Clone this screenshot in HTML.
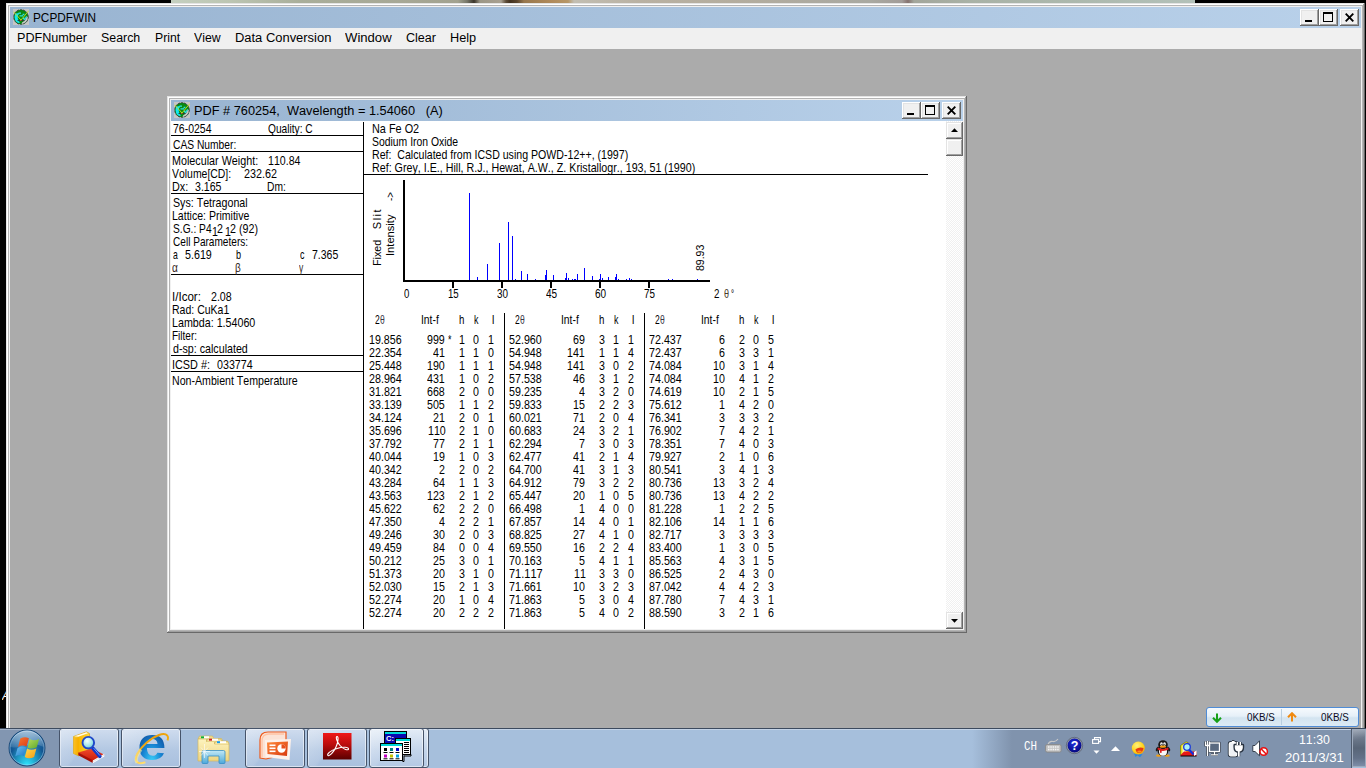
<!DOCTYPE html>
<html lang="en"><head><meta charset="utf-8"><title>PCPDFWIN</title>
<style>
*{box-sizing:border-box;margin:0;padding:0}
html,body{width:1366px;height:768px;overflow:hidden;background:#000}
body{position:relative;font-family:'Liberation Sans',sans-serif;font-size:12px;color:#000}
div,span,svg{position:absolute}
.t{white-space:pre;line-height:1;transform-origin:0 0;font-kerning:none}
.n{font-size:13px}
.c{font-size:11px}
.u,.d{font-size:12px}
.m{font-size:12px;font-family:'Liberation Mono',monospace}
.g{font-size:13px;font-family:'Liberation Serif',serif}
.frame{background:#f0f0f0;box-shadow:inset -1px -1px 0 #696969,inset 1px 1px 0 #e3e3e3,inset -2px -2px 0 #a0a0a0,inset 2px 2px 0 #fff,inset 0 0 0 3px #b4b4b4}
.cap{background:linear-gradient(90deg,#99b4d1,#b9d1ea);height:21px}
.btn{width:19px;height:17px;background:#f0f0f0;box-shadow:inset -1px -1px 0 #696969,inset 1px 1px 0 #fff,inset -2px -2px 0 #a0a0a0,inset 2px 2px 0 #e3e3e3}
.sb{width:17px;height:17px;background:#f0f0f0;box-shadow:inset -1px -1px 0 #696969,inset 1px 1px 0 #e3e3e3,inset -2px -2px 0 #a0a0a0,inset 2px 2px 0 #fff}
.hl{height:1px;background:#000}
.vl{width:1px;background:#000}
.pk{width:1px;background:#00f}
.tb{border:1px solid #46546a;border-radius:3px;box-shadow:inset 0 0 0 1px rgba(255,255,255,.55)}
.gl{left:1px;top:1px;right:1px;bottom:1px;border-radius:2px;background:linear-gradient(125deg,rgba(255,255,255,.30) 0,rgba(255,255,255,.10) 38%,rgba(255,255,255,0) 42%)}
.ic{overflow:visible}
</style></head>
<body>
<div id="wall" style="left:171px;top:0;width:1024px;height:3px;background:linear-gradient(90deg,#c4cfbf 0px,#bcc5b2 60px,#a9ae9a 130px,#a7a896 230px,#a2a28f 287px,#77786a 296px,#3b352a 303px,#9c9786 309px,#a8a090 330px,#5c4c38 335px,#42321f 339px,#5a452d 346px,#98784e 353px,#b08a5a 380px,#b79766 397px,#c2beb2 403px,#b9b1a2 470px,#b4ad9e 560px,#adaaa0 640px,#a9a9a1 700px,#a29c98 731px,#85726f 737px,#a3a69b 743px,#a9b2a6 800px,#acb8ad 900px,#b3c1b9 1024px)"></div>
<span class="t u" style="left:2px;top:690px;color:#fff;font-style:italic;font-size:12px;width:4px;overflow:hidden">A</span>
<div id="main" class="frame" style="left:6px;top:3px;width:1359px;height:745px">
<div class="cap" style="left:4px;top:4px;width:1351px">
<svg width="16" height="16" viewBox="0 0 16 16" style="left:3px;top:2px"><rect width="16" height="16" fill="#c6c6c6"/><circle cx="8" cy="8" r="7.300" fill="#0a8a10"/><path d="M2.300 4.500Q.6 8 2.600 12q2 2.600 4.400 1.600L5.500 11.500Q4.200 9 5 6.500L6.500 4z" fill="#10e8f0"/><path d="M5.500 3.500h2.500v1.300H5.500zM6.500 6.200h3.500v1.400H6.500zM9.600 4.800h1.800v1.400H9.600zM10 8.500h1.500v1.500H10z" fill="#30e0e0"/><path d="M15.200 8.500a7.300 7.300 0 0 1-6.500 6.800q-1-.6.300-1.800 4-2 4.700-6.500z" fill="#c8c8c8"/><path d="M10.500 11.500q2-1.500 3-4" stroke="#30d8e0" stroke-width="1.200" fill="none"/><path d="M4.500 11.600h7" stroke="#303838" stroke-width="1"/><rect x="7.200" y="11.100" width="1.200" height="1" fill="#e07020"/><path d="M6.600 12.300h3L8 15.300z" fill="#0a8a10"/><circle cx="8" cy="8" r="7.300" fill="none" stroke="#2a3a3a" stroke-width=".9" stroke-dasharray="2.500 .8"/><path d="M.6 2.800L8 11 15.600 1.800" fill="none" stroke="#c8e020" stroke-width=".9"/></svg>
<span class="t u" style="left:23.00px;top:5px;transform:scaleX(0.9837);">PCPDFWIN</span>
<div class="btn" style="left:1290px;top:2px"><div style="left:5px;top:11px;width:7px;height:2px;background:#000"></div></div><div class="btn" style="left:1309px;top:2px"><div style="left:4px;top:3px;width:10px;height:10px;border:1px solid #000;border-top-width:2px"></div></div><div class="btn" style="left:1330px;top:2px"><svg width="9" height="9" viewBox="0 0 9 9" style="left:5px;top:4px"><path d="M0.7 0.7L8.3 8.3M8.3 0.7L0.7 8.3" stroke="#000" stroke-width="1.9"/></svg></div>
</div>
<div id="menu" style="left:4px;top:25px;width:1351px;height:21px;background:#f0f0f0">
<span class="t u" style="left:7.00px;top:4px;transform:scaleX(1.0497);">PDFNumber</span>
<span class="t u" style="left:91.20px;top:4px;transform:scaleX(1.0309);">Search</span>
<span class="t u" style="left:144.50px;top:4px;transform:scaleX(1.0182);">Print</span>
<span class="t u" style="left:184.30px;top:4px;transform:scaleX(1.0219);">View</span>
<span class="t u" style="left:225.40px;top:4px;transform:scaleX(1.0777);">Data Conversion</span>
<span class="t u" style="left:335.00px;top:4px;transform:scaleX(1.0927);">Window</span>
<span class="t u" style="left:396.00px;top:4px;transform:scaleX(1.0460);">Clear</span>
<span class="t u" style="left:440.00px;top:4px;transform:scaleX(1.0598);">Help</span>
</div>
<div id="mdi" style="left:4px;top:46px;width:1351px;height:700px;background:#ababab">
<div id="child" class="frame" style="left:157px;top:47px;width:800px;height:537px">
<div class="cap" style="left:4px;top:4px;width:792px">
<svg width="16" height="16" viewBox="0 0 16 16" style="left:3px;top:2px"><rect width="16" height="16" fill="#c6c6c6"/><circle cx="8" cy="8" r="7.300" fill="#0a8a10"/><path d="M2.300 4.500Q.6 8 2.600 12q2 2.600 4.400 1.600L5.500 11.500Q4.200 9 5 6.500L6.500 4z" fill="#10e8f0"/><path d="M5.500 3.500h2.500v1.300H5.500zM6.500 6.200h3.500v1.400H6.500zM9.600 4.800h1.800v1.400H9.600zM10 8.500h1.500v1.500H10z" fill="#30e0e0"/><path d="M15.200 8.500a7.300 7.300 0 0 1-6.500 6.800q-1-.6.300-1.800 4-2 4.700-6.500z" fill="#c8c8c8"/><path d="M10.500 11.500q2-1.500 3-4" stroke="#30d8e0" stroke-width="1.200" fill="none"/><path d="M4.500 11.600h7" stroke="#303838" stroke-width="1"/><rect x="7.200" y="11.100" width="1.200" height="1" fill="#e07020"/><path d="M6.600 12.300h3L8 15.300z" fill="#0a8a10"/><circle cx="8" cy="8" r="7.300" fill="none" stroke="#2a3a3a" stroke-width=".9" stroke-dasharray="2.500 .8"/><path d="M.6 2.800L8 11 15.600 1.800" fill="none" stroke="#c8e020" stroke-width=".9"/></svg>
<span class="t u" style="left:23.00px;top:5px;transform:scaleX(1.0636);">PDF # 760254,  Wavelength = 1.54060   (A)</span>
<div class="btn" style="left:731px;top:2px"><div style="left:5px;top:11px;width:7px;height:2px;background:#000"></div></div><div class="btn" style="left:750px;top:2px"><div style="left:4px;top:3px;width:10px;height:10px;border:1px solid #000;border-top-width:2px"></div></div><div class="btn" style="left:771px;top:2px"><svg width="9" height="9" viewBox="0 0 9 9" style="left:5px;top:4px"><path d="M0.7 0.7L8.3 8.3M8.3 0.7L0.7 8.3" stroke="#000" stroke-width="1.9"/></svg></div>
</div>
<div id="content" style="left:4px;top:25px;width:775px;height:508px;background:#fff;overflow:hidden">
<div class="hl" style="left:0;top:14px;width:193px"></div>
<div class="hl" style="left:0;top:30px;width:193px"></div>
<div class="hl" style="left:0;top:72px;width:193px"></div>
<div class="hl" style="left:0;top:153px;width:193px"></div>
<div class="hl" style="left:0;top:234px;width:193px"></div>
<div class="hl" style="left:0;top:250px;width:193px"></div>
<div class="vl" style="left:192px;top:1px;height:507px"></div>
<div class="hl" style="left:192px;top:53px;width:565px"></div>
<span class="t n" style="left:1.70px;top:1px;transform:scaleX(0.8067);">76-0254</span>
<span class="t n" style="left:96.80px;top:1px;transform:scaleX(0.7833);">Quality: C</span>
<span class="t n" style="left:1.70px;top:17px;transform:scaleX(0.7892);">CAS Number:</span>
<span class="t n" style="left:0.87px;top:33px;transform:scaleX(0.8279);">Molecular Weight:</span>
<span class="t n" style="left:97.30px;top:33px;transform:scaleX(0.8168);">110.84</span>
<span class="t n" style="left:1.30px;top:46px;transform:scaleX(0.8029);">Volume[CD]:</span>
<span class="t n" style="left:72.60px;top:46px;transform:scaleX(0.8297);">232.62</span>
<span class="t n" style="left:0.87px;top:59px;transform:scaleX(0.8330);">Dx:</span>
<span class="t n" style="left:23.90px;top:59px;transform:scaleX(0.8142);">3.165</span>
<span class="t n" style="left:96.01px;top:59px;transform:scaleX(0.7877);">Dm:</span>
<span class="t n" style="left:1.70px;top:75px;transform:scaleX(0.8193);">Sys: Tetragonal</span>
<span class="t n" style="left:0.89px;top:88px;transform:scaleX(0.8106);">Lattice: Primitive</span>
<span class="t n" style="left:1.70px;top:114px;transform:scaleX(0.7755);">Cell Parameters:</span>
<span class="t n" style="left:1.70px;top:127px;transform:scaleX(0.6625);">a</span>
<span class="t n" style="left:13.70px;top:127px;transform:scaleX(0.8235);">5.619</span>
<span class="t n" style="left:65.00px;top:127px;transform:scaleX(0.7000);">b</span>
<span class="t n" style="left:128.80px;top:127px;transform:scaleX(0.6857);">c</span>
<span class="t n" style="left:140.90px;top:127px;transform:scaleX(0.8080);">7.365</span>
<span class="t n" style="left:0.81px;top:169px;transform:scaleX(0.8901);">I/Icor:</span>
<span class="t n" style="left:39.70px;top:169px;transform:scaleX(0.8177);">2.08</span>
<span class="t n" style="left:0.89px;top:182px;transform:scaleX(0.8090);">Rad: CuKa1</span>
<span class="t n" style="left:0.88px;top:195px;transform:scaleX(0.8233);">Lambda: 1.54060</span>
<span class="t n" style="left:0.93px;top:208px;transform:scaleX(0.7705);">Filter:</span>
<span class="t n" style="left:1.70px;top:221px;transform:scaleX(0.8214);">d-sp: calculated</span>
<span class="t n" style="left:0.86px;top:237px;transform:scaleX(0.8360);">ICSD #:</span>
<span class="t n" style="left:45.70px;top:237px;transform:scaleX(0.8227);">033774</span>
<span class="t n" style="left:0.88px;top:253px;transform:scaleX(0.8160);">Non-Ambient Temperature</span>
<span class="t n" style="left:1.70px;top:101px;transform:scaleX(0.7853);">S.G.: P4</span>
<span class="t n" style="left:41.20px;top:104px;transform:scaleX(0.8200);">1</span><span class="t n" style="left:45.60px;top:101px;transform:scaleX(0.8200);">2</span><span class="t n" style="left:53.60px;top:104px;transform:scaleX(0.8200);">1</span><span class="t n" style="left:58.60px;top:101px;transform:scaleX(0.8236);">2 (92)</span>
<span class="t n" style="left:0.90px;top:140px;transform:scaleX(0.7750);color:#33261c;">α</span>
<span class="t n" style="left:64.40px;top:140px;transform:scaleX(0.7714);color:#33261c;">β</span>
<span class="t n" style="left:127.90px;top:140px;transform:scaleX(0.6571);color:#33261c;">γ</span>
<span class="t n" style="left:200.56px;top:1px;transform:scaleX(0.8363);">Na Fe O2</span>
<span class="t n" style="left:201.40px;top:14px;transform:scaleX(0.7996);">Sodium Iron Oxide</span>
<span class="t n" style="left:200.58px;top:27px;transform:scaleX(0.8151);">Ref:  Calculated from ICSD using POWD-12++, (1997)</span>
<span class="t n" style="left:200.58px;top:40px;transform:scaleX(0.8225);">Ref: Grey, I.E., Hill, R.J., Hewat, A.W., Z. Kristallogr., 193, 51 (1990)</span>
<div id="chart" style="left:193px;top:55px;width:400px;height:135px">
<div style="left:39px;top:4px;width:2px;height:102px;background:#000"></div>
<div style="left:39px;top:104px;width:307px;height:2px;background:#000"></div>
<div style="left:88px;top:106px;width:2px;height:6px;background:#000"></div>
<div style="left:137px;top:106px;width:2px;height:6px;background:#000"></div>
<div style="left:186px;top:106px;width:2px;height:6px;background:#000"></div>
<div style="left:235px;top:106px;width:2px;height:6px;background:#000"></div>
<div style="left:284px;top:106px;width:2px;height:6px;background:#000"></div>
<div class="pk" style="left:105px;top:17px;height:87px"></div><div class="pk" style="left:113px;top:101px;height:3px"></div><div class="pk" style="left:123px;top:88px;height:16px"></div><div class="pk" style="left:135px;top:67px;height:37px"></div><div class="pk" style="left:144px;top:46px;height:58px"></div><div class="pk" style="left:148px;top:60px;height:44px"></div><div class="pk" style="left:151px;top:103px;height:1px"></div><div class="pk" style="left:157px;top:95px;height:9px"></div><div class="pk" style="left:163px;top:98px;height:6px"></div><div class="pk" style="left:171px;top:103px;height:1px"></div><div class="pk" style="left:181px;top:99px;height:5px"></div><div class="pk" style="left:182px;top:94px;height:10px"></div><div class="pk" style="left:189px;top:99px;height:5px"></div><div class="pk" style="left:201px;top:102px;height:2px"></div><div class="pk" style="left:202px;top:97px;height:7px"></div><div class="pk" style="left:204px;top:102px;height:2px"></div><div class="pk" style="left:208px;top:103px;height:1px"></div><div class="pk" style="left:210px;top:103px;height:1px"></div><div class="pk" style="left:211px;top:103px;height:1px"></div><div class="pk" style="left:213px;top:98px;height:6px"></div><div class="pk" style="left:220px;top:92px;height:12px"></div><div class="pk" style="left:228px;top:100px;height:4px"></div><div class="pk" style="left:235px;top:103px;height:1px"></div><div class="pk" style="left:236px;top:98px;height:6px"></div><div class="pk" style="left:238px;top:102px;height:2px"></div><div class="pk" style="left:244px;top:101px;height:3px"></div><div class="pk" style="left:251px;top:101px;height:3px"></div><div class="pk" style="left:252px;top:98px;height:6px"></div><div class="pk" style="left:254px;top:103px;height:1px"></div><div class="pk" style="left:262px;top:103px;height:1px"></div><div class="pk" style="left:265px;top:102px;height:2px"></div><div class="pk" style="left:267px;top:103px;height:1px"></div><div class="pk" style="left:304px;top:103px;height:1px"></div><div class="pk" style="left:308px;top:103px;height:1px"></div><div class="pk" style="left:333px;top:103px;height:1px"></div>
<span class="t d" style="left:40.40px;top:112px;transform:scaleX(0.8000);">0</span>
<span class="t d" style="left:84.00px;top:112px;transform:scaleX(0.8045);">15</span>
<span class="t d" style="left:132.90px;top:112px;transform:scaleX(0.8264);">30</span>
<span class="t d" style="left:181.60px;top:112px;transform:scaleX(0.8337);">45</span>
<span class="t d" style="left:230.80px;top:112px;transform:scaleX(0.8337);">60</span>
<span class="t d" style="left:280.00px;top:112px;transform:scaleX(0.8191);">75</span>
<span class="t d" style="left:349.70px;top:112px;transform:scaleX(0.8143);">2</span>
<span class="t d" style="left:360.20px;top:112px;transform:scaleX(0.7571);color:#4a3a2a;">θ</span>
<span class="t d" style="left:367.00px;top:112px;transform:scaleX(0.6400);">°</span>
<div style="left:17px;top:90px;width:0;height:0;transform:rotate(-90deg);transform-origin:0 0"><span class="t c" style="left:0.20px;top:-9px;transform:scaleX(0.9783);">Fixed</span><span class="t c" style="left:36.80px;top:-9px;letter-spacing:1.5px;">Slit</span></div>
<div style="left:30px;top:80px;width:0;height:0;transform:rotate(-90deg);transform-origin:0 0"><span class="t c" style="left:-0.21px;top:-9px;transform:scaleX(1.0132);">Intensity</span><span class="t c" style="left:55.30px;top:-9px;transform:scaleX(0.8900);">-&gt;</span></div>
<div style="left:340px;top:96px;width:0;height:0;transform:rotate(-90deg);transform-origin:0 0"><span class="t c" style="left:0.90px;top:-9px;transform:scaleX(0.9559);">89.93</span></div>
</div>
<div id="table" style="left:193px;top:187px;width:420px;height:320px">
<span class="t n" style="left:10.80px;top:5px;transform:scaleX(0.6571);">2</span>
<span class="t n" style="left:16.30px;top:5px;transform:scaleX(0.6571);color:#3a3a4a;">θ</span>
<span class="t n" style="left:56.91px;top:5px;transform:scaleX(0.7942);">Int-f</span>
<span class="t n" style="left:94.80px;top:5px;transform:scaleX(0.7429);">h</span>
<span class="t n" style="left:109.80px;top:5px;transform:scaleX(0.6857);">k</span>
<span class="t n" style="left:128.30px;top:5px;transform:scaleX(0.8200);">l</span>
<span class="t n" style="left:5.20px;top:25px;transform:scaleX(0.8200);">19.856</span>
<span class="t n" style="left:62.80px;top:25px;transform:scaleX(0.8200);">999</span>
<span class="t n" style="left:83.70px;top:25px;transform:scaleX(0.6800);">*</span>
<span class="t n" style="left:94.56px;top:25px;transform:scaleX(0.8200);">1</span>
<span class="t n" style="left:109.16px;top:25px;transform:scaleX(0.8200);">0</span>
<span class="t n" style="left:124.26px;top:25px;transform:scaleX(0.8200);">1</span>
<span class="t n" style="left:5.20px;top:38px;transform:scaleX(0.8247);">22.354</span>
<span class="t n" style="left:68.73px;top:38px;transform:scaleX(0.8200);">41</span>
<span class="t n" style="left:94.56px;top:38px;transform:scaleX(0.8200);">1</span>
<span class="t n" style="left:109.16px;top:38px;transform:scaleX(0.8200);">1</span>
<span class="t n" style="left:124.26px;top:38px;transform:scaleX(0.8200);">0</span>
<span class="t n" style="left:5.20px;top:51px;transform:scaleX(0.8247);">25.448</span>
<span class="t n" style="left:62.80px;top:51px;transform:scaleX(0.8200);">190</span>
<span class="t n" style="left:94.56px;top:51px;transform:scaleX(0.8200);">1</span>
<span class="t n" style="left:109.16px;top:51px;transform:scaleX(0.8200);">1</span>
<span class="t n" style="left:124.26px;top:51px;transform:scaleX(0.8200);">1</span>
<span class="t n" style="left:5.20px;top:64px;transform:scaleX(0.8247);">28.964</span>
<span class="t n" style="left:62.80px;top:64px;transform:scaleX(0.8200);">431</span>
<span class="t n" style="left:94.56px;top:64px;transform:scaleX(0.8200);">1</span>
<span class="t n" style="left:109.16px;top:64px;transform:scaleX(0.8200);">0</span>
<span class="t n" style="left:124.26px;top:64px;transform:scaleX(0.8200);">2</span>
<span class="t n" style="left:5.20px;top:77px;transform:scaleX(0.8247);">31.821</span>
<span class="t n" style="left:62.80px;top:77px;transform:scaleX(0.8200);">668</span>
<span class="t n" style="left:94.56px;top:77px;transform:scaleX(0.8200);">2</span>
<span class="t n" style="left:109.16px;top:77px;transform:scaleX(0.8200);">0</span>
<span class="t n" style="left:124.26px;top:77px;transform:scaleX(0.8200);">0</span>
<span class="t n" style="left:5.20px;top:90px;transform:scaleX(0.8247);">33.139</span>
<span class="t n" style="left:62.80px;top:90px;transform:scaleX(0.8200);">505</span>
<span class="t n" style="left:94.56px;top:90px;transform:scaleX(0.8200);">1</span>
<span class="t n" style="left:109.16px;top:90px;transform:scaleX(0.8200);">1</span>
<span class="t n" style="left:124.26px;top:90px;transform:scaleX(0.8200);">2</span>
<span class="t n" style="left:5.20px;top:103px;transform:scaleX(0.8247);">34.124</span>
<span class="t n" style="left:68.73px;top:103px;transform:scaleX(0.8200);">21</span>
<span class="t n" style="left:94.56px;top:103px;transform:scaleX(0.8200);">2</span>
<span class="t n" style="left:109.16px;top:103px;transform:scaleX(0.8200);">0</span>
<span class="t n" style="left:124.26px;top:103px;transform:scaleX(0.8200);">1</span>
<span class="t n" style="left:5.20px;top:116px;transform:scaleX(0.8247);">35.696</span>
<span class="t n" style="left:63.59px;top:116px;transform:scaleX(0.8200);">110</span>
<span class="t n" style="left:94.56px;top:116px;transform:scaleX(0.8200);">2</span>
<span class="t n" style="left:109.16px;top:116px;transform:scaleX(0.8200);">1</span>
<span class="t n" style="left:124.26px;top:116px;transform:scaleX(0.8200);">0</span>
<span class="t n" style="left:5.20px;top:129px;transform:scaleX(0.8247);">37.792</span>
<span class="t n" style="left:68.73px;top:129px;transform:scaleX(0.8200);">77</span>
<span class="t n" style="left:94.56px;top:129px;transform:scaleX(0.8200);">2</span>
<span class="t n" style="left:109.16px;top:129px;transform:scaleX(0.8200);">1</span>
<span class="t n" style="left:124.26px;top:129px;transform:scaleX(0.8200);">1</span>
<span class="t n" style="left:5.20px;top:142px;transform:scaleX(0.8247);">40.044</span>
<span class="t n" style="left:68.73px;top:142px;transform:scaleX(0.8200);">19</span>
<span class="t n" style="left:94.56px;top:142px;transform:scaleX(0.8200);">1</span>
<span class="t n" style="left:109.16px;top:142px;transform:scaleX(0.8200);">0</span>
<span class="t n" style="left:124.26px;top:142px;transform:scaleX(0.8200);">3</span>
<span class="t n" style="left:5.20px;top:155px;transform:scaleX(0.8247);">40.342</span>
<span class="t n" style="left:74.66px;top:155px;transform:scaleX(0.8200);">2</span>
<span class="t n" style="left:94.56px;top:155px;transform:scaleX(0.8200);">2</span>
<span class="t n" style="left:109.16px;top:155px;transform:scaleX(0.8200);">0</span>
<span class="t n" style="left:124.26px;top:155px;transform:scaleX(0.8200);">2</span>
<span class="t n" style="left:5.20px;top:168px;transform:scaleX(0.8247);">43.284</span>
<span class="t n" style="left:68.73px;top:168px;transform:scaleX(0.8200);">64</span>
<span class="t n" style="left:94.56px;top:168px;transform:scaleX(0.8200);">1</span>
<span class="t n" style="left:109.16px;top:168px;transform:scaleX(0.8200);">1</span>
<span class="t n" style="left:124.26px;top:168px;transform:scaleX(0.8200);">3</span>
<span class="t n" style="left:5.20px;top:181px;transform:scaleX(0.8247);">43.563</span>
<span class="t n" style="left:62.80px;top:181px;transform:scaleX(0.8200);">123</span>
<span class="t n" style="left:94.56px;top:181px;transform:scaleX(0.8200);">2</span>
<span class="t n" style="left:109.16px;top:181px;transform:scaleX(0.8200);">1</span>
<span class="t n" style="left:124.26px;top:181px;transform:scaleX(0.8200);">2</span>
<span class="t n" style="left:5.20px;top:194px;transform:scaleX(0.8247);">45.622</span>
<span class="t n" style="left:68.73px;top:194px;transform:scaleX(0.8200);">62</span>
<span class="t n" style="left:94.56px;top:194px;transform:scaleX(0.8200);">2</span>
<span class="t n" style="left:109.16px;top:194px;transform:scaleX(0.8200);">2</span>
<span class="t n" style="left:124.26px;top:194px;transform:scaleX(0.8200);">0</span>
<span class="t n" style="left:5.20px;top:207px;transform:scaleX(0.8247);">47.350</span>
<span class="t n" style="left:74.66px;top:207px;transform:scaleX(0.8200);">4</span>
<span class="t n" style="left:94.56px;top:207px;transform:scaleX(0.8200);">2</span>
<span class="t n" style="left:109.16px;top:207px;transform:scaleX(0.8200);">2</span>
<span class="t n" style="left:124.26px;top:207px;transform:scaleX(0.8200);">1</span>
<span class="t n" style="left:5.20px;top:220px;transform:scaleX(0.8247);">49.246</span>
<span class="t n" style="left:68.73px;top:220px;transform:scaleX(0.8200);">30</span>
<span class="t n" style="left:94.56px;top:220px;transform:scaleX(0.8200);">2</span>
<span class="t n" style="left:109.16px;top:220px;transform:scaleX(0.8200);">0</span>
<span class="t n" style="left:124.26px;top:220px;transform:scaleX(0.8200);">3</span>
<span class="t n" style="left:5.20px;top:233px;transform:scaleX(0.8247);">49.459</span>
<span class="t n" style="left:68.73px;top:233px;transform:scaleX(0.8200);">84</span>
<span class="t n" style="left:94.56px;top:233px;transform:scaleX(0.8200);">0</span>
<span class="t n" style="left:109.16px;top:233px;transform:scaleX(0.8200);">0</span>
<span class="t n" style="left:124.26px;top:233px;transform:scaleX(0.8200);">4</span>
<span class="t n" style="left:5.20px;top:246px;transform:scaleX(0.8247);">50.212</span>
<span class="t n" style="left:68.73px;top:246px;transform:scaleX(0.8200);">25</span>
<span class="t n" style="left:94.56px;top:246px;transform:scaleX(0.8200);">3</span>
<span class="t n" style="left:109.16px;top:246px;transform:scaleX(0.8200);">0</span>
<span class="t n" style="left:124.26px;top:246px;transform:scaleX(0.8200);">1</span>
<span class="t n" style="left:5.20px;top:259px;transform:scaleX(0.8247);">51.373</span>
<span class="t n" style="left:68.73px;top:259px;transform:scaleX(0.8200);">20</span>
<span class="t n" style="left:94.56px;top:259px;transform:scaleX(0.8200);">3</span>
<span class="t n" style="left:109.16px;top:259px;transform:scaleX(0.8200);">1</span>
<span class="t n" style="left:124.26px;top:259px;transform:scaleX(0.8200);">0</span>
<span class="t n" style="left:5.20px;top:272px;transform:scaleX(0.8247);">52.030</span>
<span class="t n" style="left:68.73px;top:272px;transform:scaleX(0.8200);">15</span>
<span class="t n" style="left:94.56px;top:272px;transform:scaleX(0.8200);">2</span>
<span class="t n" style="left:109.16px;top:272px;transform:scaleX(0.8200);">1</span>
<span class="t n" style="left:124.26px;top:272px;transform:scaleX(0.8200);">3</span>
<span class="t n" style="left:5.20px;top:285px;transform:scaleX(0.8247);">52.274</span>
<span class="t n" style="left:68.73px;top:285px;transform:scaleX(0.8200);">20</span>
<span class="t n" style="left:94.56px;top:285px;transform:scaleX(0.8200);">1</span>
<span class="t n" style="left:109.16px;top:285px;transform:scaleX(0.8200);">0</span>
<span class="t n" style="left:124.26px;top:285px;transform:scaleX(0.8200);">4</span>
<span class="t n" style="left:5.20px;top:298px;transform:scaleX(0.8247);">52.274</span>
<span class="t n" style="left:68.73px;top:298px;transform:scaleX(0.8200);">20</span>
<span class="t n" style="left:94.56px;top:298px;transform:scaleX(0.8200);">2</span>
<span class="t n" style="left:109.16px;top:298px;transform:scaleX(0.8200);">2</span>
<span class="t n" style="left:124.26px;top:298px;transform:scaleX(0.8200);">2</span>
<div class="vl" style="left:140px;top:5px;height:316px"></div>
<span class="t n" style="left:150.80px;top:5px;transform:scaleX(0.6571);">2</span>
<span class="t n" style="left:156.30px;top:5px;transform:scaleX(0.6571);color:#3a3a4a;">θ</span>
<span class="t n" style="left:196.91px;top:5px;transform:scaleX(0.7942);">Int-f</span>
<span class="t n" style="left:234.80px;top:5px;transform:scaleX(0.7429);">h</span>
<span class="t n" style="left:249.80px;top:5px;transform:scaleX(0.6857);">k</span>
<span class="t n" style="left:268.30px;top:5px;transform:scaleX(0.8200);">l</span>
<span class="t n" style="left:145.20px;top:25px;transform:scaleX(0.8247);">52.960</span>
<span class="t n" style="left:208.73px;top:25px;transform:scaleX(0.8200);">69</span>
<span class="t n" style="left:234.56px;top:25px;transform:scaleX(0.8200);">3</span>
<span class="t n" style="left:249.16px;top:25px;transform:scaleX(0.8200);">1</span>
<span class="t n" style="left:264.26px;top:25px;transform:scaleX(0.8200);">1</span>
<span class="t n" style="left:145.20px;top:38px;transform:scaleX(0.8247);">54.948</span>
<span class="t n" style="left:202.80px;top:38px;transform:scaleX(0.8200);">141</span>
<span class="t n" style="left:234.56px;top:38px;transform:scaleX(0.8200);">1</span>
<span class="t n" style="left:249.16px;top:38px;transform:scaleX(0.8200);">1</span>
<span class="t n" style="left:264.26px;top:38px;transform:scaleX(0.8200);">4</span>
<span class="t n" style="left:145.20px;top:51px;transform:scaleX(0.8247);">54.948</span>
<span class="t n" style="left:202.80px;top:51px;transform:scaleX(0.8200);">141</span>
<span class="t n" style="left:234.56px;top:51px;transform:scaleX(0.8200);">3</span>
<span class="t n" style="left:249.16px;top:51px;transform:scaleX(0.8200);">0</span>
<span class="t n" style="left:264.26px;top:51px;transform:scaleX(0.8200);">2</span>
<span class="t n" style="left:145.20px;top:64px;transform:scaleX(0.8247);">57.538</span>
<span class="t n" style="left:208.73px;top:64px;transform:scaleX(0.8200);">46</span>
<span class="t n" style="left:234.56px;top:64px;transform:scaleX(0.8200);">3</span>
<span class="t n" style="left:249.16px;top:64px;transform:scaleX(0.8200);">1</span>
<span class="t n" style="left:264.26px;top:64px;transform:scaleX(0.8200);">2</span>
<span class="t n" style="left:145.20px;top:77px;transform:scaleX(0.8247);">59.235</span>
<span class="t n" style="left:214.66px;top:77px;transform:scaleX(0.8200);">4</span>
<span class="t n" style="left:234.56px;top:77px;transform:scaleX(0.8200);">3</span>
<span class="t n" style="left:249.16px;top:77px;transform:scaleX(0.8200);">2</span>
<span class="t n" style="left:264.26px;top:77px;transform:scaleX(0.8200);">0</span>
<span class="t n" style="left:145.20px;top:90px;transform:scaleX(0.8247);">59.833</span>
<span class="t n" style="left:208.73px;top:90px;transform:scaleX(0.8200);">15</span>
<span class="t n" style="left:234.56px;top:90px;transform:scaleX(0.8200);">2</span>
<span class="t n" style="left:249.16px;top:90px;transform:scaleX(0.8200);">2</span>
<span class="t n" style="left:264.26px;top:90px;transform:scaleX(0.8200);">3</span>
<span class="t n" style="left:145.20px;top:103px;transform:scaleX(0.8247);">60.021</span>
<span class="t n" style="left:208.73px;top:103px;transform:scaleX(0.8200);">71</span>
<span class="t n" style="left:234.56px;top:103px;transform:scaleX(0.8200);">2</span>
<span class="t n" style="left:249.16px;top:103px;transform:scaleX(0.8200);">0</span>
<span class="t n" style="left:264.26px;top:103px;transform:scaleX(0.8200);">4</span>
<span class="t n" style="left:145.20px;top:116px;transform:scaleX(0.8247);">60.683</span>
<span class="t n" style="left:208.73px;top:116px;transform:scaleX(0.8200);">24</span>
<span class="t n" style="left:234.56px;top:116px;transform:scaleX(0.8200);">3</span>
<span class="t n" style="left:249.16px;top:116px;transform:scaleX(0.8200);">2</span>
<span class="t n" style="left:264.26px;top:116px;transform:scaleX(0.8200);">1</span>
<span class="t n" style="left:145.20px;top:129px;transform:scaleX(0.8247);">62.294</span>
<span class="t n" style="left:214.66px;top:129px;transform:scaleX(0.8200);">7</span>
<span class="t n" style="left:234.56px;top:129px;transform:scaleX(0.8200);">3</span>
<span class="t n" style="left:249.16px;top:129px;transform:scaleX(0.8200);">0</span>
<span class="t n" style="left:264.26px;top:129px;transform:scaleX(0.8200);">3</span>
<span class="t n" style="left:145.20px;top:142px;transform:scaleX(0.8247);">62.477</span>
<span class="t n" style="left:208.73px;top:142px;transform:scaleX(0.8200);">41</span>
<span class="t n" style="left:234.56px;top:142px;transform:scaleX(0.8200);">2</span>
<span class="t n" style="left:249.16px;top:142px;transform:scaleX(0.8200);">1</span>
<span class="t n" style="left:264.26px;top:142px;transform:scaleX(0.8200);">4</span>
<span class="t n" style="left:145.20px;top:155px;transform:scaleX(0.8247);">64.700</span>
<span class="t n" style="left:208.73px;top:155px;transform:scaleX(0.8200);">41</span>
<span class="t n" style="left:234.56px;top:155px;transform:scaleX(0.8200);">3</span>
<span class="t n" style="left:249.16px;top:155px;transform:scaleX(0.8200);">1</span>
<span class="t n" style="left:264.26px;top:155px;transform:scaleX(0.8200);">3</span>
<span class="t n" style="left:145.20px;top:168px;transform:scaleX(0.8247);">64.912</span>
<span class="t n" style="left:208.73px;top:168px;transform:scaleX(0.8200);">79</span>
<span class="t n" style="left:234.56px;top:168px;transform:scaleX(0.8200);">3</span>
<span class="t n" style="left:249.16px;top:168px;transform:scaleX(0.8200);">2</span>
<span class="t n" style="left:264.26px;top:168px;transform:scaleX(0.8200);">2</span>
<span class="t n" style="left:145.20px;top:181px;transform:scaleX(0.8247);">65.447</span>
<span class="t n" style="left:208.73px;top:181px;transform:scaleX(0.8200);">20</span>
<span class="t n" style="left:234.56px;top:181px;transform:scaleX(0.8200);">1</span>
<span class="t n" style="left:249.16px;top:181px;transform:scaleX(0.8200);">0</span>
<span class="t n" style="left:264.26px;top:181px;transform:scaleX(0.8200);">5</span>
<span class="t n" style="left:145.20px;top:194px;transform:scaleX(0.8247);">66.498</span>
<span class="t n" style="left:214.66px;top:194px;transform:scaleX(0.8200);">1</span>
<span class="t n" style="left:234.56px;top:194px;transform:scaleX(0.8200);">4</span>
<span class="t n" style="left:249.16px;top:194px;transform:scaleX(0.8200);">0</span>
<span class="t n" style="left:264.26px;top:194px;transform:scaleX(0.8200);">0</span>
<span class="t n" style="left:145.20px;top:207px;transform:scaleX(0.8247);">67.857</span>
<span class="t n" style="left:208.73px;top:207px;transform:scaleX(0.8200);">14</span>
<span class="t n" style="left:234.56px;top:207px;transform:scaleX(0.8200);">4</span>
<span class="t n" style="left:249.16px;top:207px;transform:scaleX(0.8200);">0</span>
<span class="t n" style="left:264.26px;top:207px;transform:scaleX(0.8200);">1</span>
<span class="t n" style="left:145.20px;top:220px;transform:scaleX(0.8247);">68.825</span>
<span class="t n" style="left:208.73px;top:220px;transform:scaleX(0.8200);">27</span>
<span class="t n" style="left:234.56px;top:220px;transform:scaleX(0.8200);">4</span>
<span class="t n" style="left:249.16px;top:220px;transform:scaleX(0.8200);">1</span>
<span class="t n" style="left:264.26px;top:220px;transform:scaleX(0.8200);">0</span>
<span class="t n" style="left:145.20px;top:233px;transform:scaleX(0.8247);">69.550</span>
<span class="t n" style="left:208.73px;top:233px;transform:scaleX(0.8200);">16</span>
<span class="t n" style="left:234.56px;top:233px;transform:scaleX(0.8200);">2</span>
<span class="t n" style="left:249.16px;top:233px;transform:scaleX(0.8200);">2</span>
<span class="t n" style="left:264.26px;top:233px;transform:scaleX(0.8200);">4</span>
<span class="t n" style="left:145.20px;top:246px;transform:scaleX(0.8247);">70.163</span>
<span class="t n" style="left:214.66px;top:246px;transform:scaleX(0.8200);">5</span>
<span class="t n" style="left:234.56px;top:246px;transform:scaleX(0.8200);">4</span>
<span class="t n" style="left:249.16px;top:246px;transform:scaleX(0.8200);">1</span>
<span class="t n" style="left:264.26px;top:246px;transform:scaleX(0.8200);">1</span>
<span class="t n" style="left:145.20px;top:259px;transform:scaleX(0.8453);">71.117</span>
<span class="t n" style="left:209.52px;top:259px;transform:scaleX(0.8200);">11</span>
<span class="t n" style="left:234.56px;top:259px;transform:scaleX(0.8200);">3</span>
<span class="t n" style="left:249.16px;top:259px;transform:scaleX(0.8200);">3</span>
<span class="t n" style="left:264.26px;top:259px;transform:scaleX(0.8200);">0</span>
<span class="t n" style="left:145.20px;top:272px;transform:scaleX(0.8247);">71.661</span>
<span class="t n" style="left:208.73px;top:272px;transform:scaleX(0.8200);">10</span>
<span class="t n" style="left:234.56px;top:272px;transform:scaleX(0.8200);">3</span>
<span class="t n" style="left:249.16px;top:272px;transform:scaleX(0.8200);">2</span>
<span class="t n" style="left:264.26px;top:272px;transform:scaleX(0.8200);">3</span>
<span class="t n" style="left:145.20px;top:285px;transform:scaleX(0.8247);">71.863</span>
<span class="t n" style="left:214.66px;top:285px;transform:scaleX(0.8200);">5</span>
<span class="t n" style="left:234.56px;top:285px;transform:scaleX(0.8200);">3</span>
<span class="t n" style="left:249.16px;top:285px;transform:scaleX(0.8200);">0</span>
<span class="t n" style="left:264.26px;top:285px;transform:scaleX(0.8200);">4</span>
<span class="t n" style="left:145.20px;top:298px;transform:scaleX(0.8247);">71.863</span>
<span class="t n" style="left:214.66px;top:298px;transform:scaleX(0.8200);">5</span>
<span class="t n" style="left:234.56px;top:298px;transform:scaleX(0.8200);">4</span>
<span class="t n" style="left:249.16px;top:298px;transform:scaleX(0.8200);">0</span>
<span class="t n" style="left:264.26px;top:298px;transform:scaleX(0.8200);">2</span>
<div class="vl" style="left:280px;top:5px;height:316px"></div>
<span class="t n" style="left:290.80px;top:5px;transform:scaleX(0.6571);">2</span>
<span class="t n" style="left:296.30px;top:5px;transform:scaleX(0.6571);color:#3a3a4a;">θ</span>
<span class="t n" style="left:336.91px;top:5px;transform:scaleX(0.7942);">Int-f</span>
<span class="t n" style="left:374.80px;top:5px;transform:scaleX(0.7429);">h</span>
<span class="t n" style="left:389.80px;top:5px;transform:scaleX(0.6857);">k</span>
<span class="t n" style="left:408.30px;top:5px;transform:scaleX(0.8200);">l</span>
<span class="t n" style="left:285.20px;top:25px;transform:scaleX(0.8247);">72.437</span>
<span class="t n" style="left:354.66px;top:25px;transform:scaleX(0.8200);">6</span>
<span class="t n" style="left:374.56px;top:25px;transform:scaleX(0.8200);">2</span>
<span class="t n" style="left:389.16px;top:25px;transform:scaleX(0.8200);">0</span>
<span class="t n" style="left:404.26px;top:25px;transform:scaleX(0.8200);">5</span>
<span class="t n" style="left:285.20px;top:38px;transform:scaleX(0.8247);">72.437</span>
<span class="t n" style="left:354.66px;top:38px;transform:scaleX(0.8200);">6</span>
<span class="t n" style="left:374.56px;top:38px;transform:scaleX(0.8200);">3</span>
<span class="t n" style="left:389.16px;top:38px;transform:scaleX(0.8200);">3</span>
<span class="t n" style="left:404.26px;top:38px;transform:scaleX(0.8200);">1</span>
<span class="t n" style="left:285.20px;top:51px;transform:scaleX(0.8247);">74.084</span>
<span class="t n" style="left:348.73px;top:51px;transform:scaleX(0.8200);">10</span>
<span class="t n" style="left:374.56px;top:51px;transform:scaleX(0.8200);">3</span>
<span class="t n" style="left:389.16px;top:51px;transform:scaleX(0.8200);">1</span>
<span class="t n" style="left:404.26px;top:51px;transform:scaleX(0.8200);">4</span>
<span class="t n" style="left:285.20px;top:64px;transform:scaleX(0.8247);">74.084</span>
<span class="t n" style="left:348.73px;top:64px;transform:scaleX(0.8200);">10</span>
<span class="t n" style="left:374.56px;top:64px;transform:scaleX(0.8200);">4</span>
<span class="t n" style="left:389.16px;top:64px;transform:scaleX(0.8200);">1</span>
<span class="t n" style="left:404.26px;top:64px;transform:scaleX(0.8200);">2</span>
<span class="t n" style="left:285.20px;top:77px;transform:scaleX(0.8247);">74.619</span>
<span class="t n" style="left:348.73px;top:77px;transform:scaleX(0.8200);">10</span>
<span class="t n" style="left:374.56px;top:77px;transform:scaleX(0.8200);">2</span>
<span class="t n" style="left:389.16px;top:77px;transform:scaleX(0.8200);">1</span>
<span class="t n" style="left:404.26px;top:77px;transform:scaleX(0.8200);">5</span>
<span class="t n" style="left:285.20px;top:90px;transform:scaleX(0.8247);">75.612</span>
<span class="t n" style="left:354.66px;top:90px;transform:scaleX(0.8200);">1</span>
<span class="t n" style="left:374.56px;top:90px;transform:scaleX(0.8200);">4</span>
<span class="t n" style="left:389.16px;top:90px;transform:scaleX(0.8200);">2</span>
<span class="t n" style="left:404.26px;top:90px;transform:scaleX(0.8200);">0</span>
<span class="t n" style="left:285.20px;top:103px;transform:scaleX(0.8247);">76.341</span>
<span class="t n" style="left:354.66px;top:103px;transform:scaleX(0.8200);">3</span>
<span class="t n" style="left:374.56px;top:103px;transform:scaleX(0.8200);">3</span>
<span class="t n" style="left:389.16px;top:103px;transform:scaleX(0.8200);">3</span>
<span class="t n" style="left:404.26px;top:103px;transform:scaleX(0.8200);">2</span>
<span class="t n" style="left:285.20px;top:116px;transform:scaleX(0.8247);">76.902</span>
<span class="t n" style="left:354.66px;top:116px;transform:scaleX(0.8200);">7</span>
<span class="t n" style="left:374.56px;top:116px;transform:scaleX(0.8200);">4</span>
<span class="t n" style="left:389.16px;top:116px;transform:scaleX(0.8200);">2</span>
<span class="t n" style="left:404.26px;top:116px;transform:scaleX(0.8200);">1</span>
<span class="t n" style="left:285.20px;top:129px;transform:scaleX(0.8247);">78.351</span>
<span class="t n" style="left:354.66px;top:129px;transform:scaleX(0.8200);">7</span>
<span class="t n" style="left:374.56px;top:129px;transform:scaleX(0.8200);">4</span>
<span class="t n" style="left:389.16px;top:129px;transform:scaleX(0.8200);">0</span>
<span class="t n" style="left:404.26px;top:129px;transform:scaleX(0.8200);">3</span>
<span class="t n" style="left:285.20px;top:142px;transform:scaleX(0.8247);">79.927</span>
<span class="t n" style="left:354.66px;top:142px;transform:scaleX(0.8200);">2</span>
<span class="t n" style="left:374.56px;top:142px;transform:scaleX(0.8200);">1</span>
<span class="t n" style="left:389.16px;top:142px;transform:scaleX(0.8200);">0</span>
<span class="t n" style="left:404.26px;top:142px;transform:scaleX(0.8200);">6</span>
<span class="t n" style="left:285.20px;top:155px;transform:scaleX(0.8247);">80.541</span>
<span class="t n" style="left:354.66px;top:155px;transform:scaleX(0.8200);">3</span>
<span class="t n" style="left:374.56px;top:155px;transform:scaleX(0.8200);">4</span>
<span class="t n" style="left:389.16px;top:155px;transform:scaleX(0.8200);">1</span>
<span class="t n" style="left:404.26px;top:155px;transform:scaleX(0.8200);">3</span>
<span class="t n" style="left:285.20px;top:168px;transform:scaleX(0.8247);">80.736</span>
<span class="t n" style="left:348.73px;top:168px;transform:scaleX(0.8200);">13</span>
<span class="t n" style="left:374.56px;top:168px;transform:scaleX(0.8200);">3</span>
<span class="t n" style="left:389.16px;top:168px;transform:scaleX(0.8200);">2</span>
<span class="t n" style="left:404.26px;top:168px;transform:scaleX(0.8200);">4</span>
<span class="t n" style="left:285.20px;top:181px;transform:scaleX(0.8247);">80.736</span>
<span class="t n" style="left:348.73px;top:181px;transform:scaleX(0.8200);">13</span>
<span class="t n" style="left:374.56px;top:181px;transform:scaleX(0.8200);">4</span>
<span class="t n" style="left:389.16px;top:181px;transform:scaleX(0.8200);">2</span>
<span class="t n" style="left:404.26px;top:181px;transform:scaleX(0.8200);">2</span>
<span class="t n" style="left:285.20px;top:194px;transform:scaleX(0.8247);">81.228</span>
<span class="t n" style="left:354.66px;top:194px;transform:scaleX(0.8200);">1</span>
<span class="t n" style="left:374.56px;top:194px;transform:scaleX(0.8200);">2</span>
<span class="t n" style="left:389.16px;top:194px;transform:scaleX(0.8200);">2</span>
<span class="t n" style="left:404.26px;top:194px;transform:scaleX(0.8200);">5</span>
<span class="t n" style="left:285.20px;top:207px;transform:scaleX(0.8247);">82.106</span>
<span class="t n" style="left:348.73px;top:207px;transform:scaleX(0.8200);">14</span>
<span class="t n" style="left:374.56px;top:207px;transform:scaleX(0.8200);">1</span>
<span class="t n" style="left:389.16px;top:207px;transform:scaleX(0.8200);">1</span>
<span class="t n" style="left:404.26px;top:207px;transform:scaleX(0.8200);">6</span>
<span class="t n" style="left:285.20px;top:220px;transform:scaleX(0.8247);">82.717</span>
<span class="t n" style="left:354.66px;top:220px;transform:scaleX(0.8200);">3</span>
<span class="t n" style="left:374.56px;top:220px;transform:scaleX(0.8200);">3</span>
<span class="t n" style="left:389.16px;top:220px;transform:scaleX(0.8200);">3</span>
<span class="t n" style="left:404.26px;top:220px;transform:scaleX(0.8200);">3</span>
<span class="t n" style="left:285.20px;top:233px;transform:scaleX(0.8247);">83.400</span>
<span class="t n" style="left:354.66px;top:233px;transform:scaleX(0.8200);">1</span>
<span class="t n" style="left:374.56px;top:233px;transform:scaleX(0.8200);">3</span>
<span class="t n" style="left:389.16px;top:233px;transform:scaleX(0.8200);">0</span>
<span class="t n" style="left:404.26px;top:233px;transform:scaleX(0.8200);">5</span>
<span class="t n" style="left:285.20px;top:246px;transform:scaleX(0.8247);">85.563</span>
<span class="t n" style="left:354.66px;top:246px;transform:scaleX(0.8200);">4</span>
<span class="t n" style="left:374.56px;top:246px;transform:scaleX(0.8200);">3</span>
<span class="t n" style="left:389.16px;top:246px;transform:scaleX(0.8200);">1</span>
<span class="t n" style="left:404.26px;top:246px;transform:scaleX(0.8200);">5</span>
<span class="t n" style="left:285.20px;top:259px;transform:scaleX(0.8247);">86.525</span>
<span class="t n" style="left:354.66px;top:259px;transform:scaleX(0.8200);">2</span>
<span class="t n" style="left:374.56px;top:259px;transform:scaleX(0.8200);">4</span>
<span class="t n" style="left:389.16px;top:259px;transform:scaleX(0.8200);">3</span>
<span class="t n" style="left:404.26px;top:259px;transform:scaleX(0.8200);">0</span>
<span class="t n" style="left:285.20px;top:272px;transform:scaleX(0.8247);">87.042</span>
<span class="t n" style="left:354.66px;top:272px;transform:scaleX(0.8200);">4</span>
<span class="t n" style="left:374.56px;top:272px;transform:scaleX(0.8200);">4</span>
<span class="t n" style="left:389.16px;top:272px;transform:scaleX(0.8200);">2</span>
<span class="t n" style="left:404.26px;top:272px;transform:scaleX(0.8200);">3</span>
<span class="t n" style="left:285.20px;top:285px;transform:scaleX(0.8247);">87.780</span>
<span class="t n" style="left:354.66px;top:285px;transform:scaleX(0.8200);">7</span>
<span class="t n" style="left:374.56px;top:285px;transform:scaleX(0.8200);">4</span>
<span class="t n" style="left:389.16px;top:285px;transform:scaleX(0.8200);">3</span>
<span class="t n" style="left:404.26px;top:285px;transform:scaleX(0.8200);">1</span>
<span class="t n" style="left:285.20px;top:298px;transform:scaleX(0.8247);">88.590</span>
<span class="t n" style="left:354.66px;top:298px;transform:scaleX(0.8200);">3</span>
<span class="t n" style="left:374.56px;top:298px;transform:scaleX(0.8200);">2</span>
<span class="t n" style="left:389.16px;top:298px;transform:scaleX(0.8200);">1</span>
<span class="t n" style="left:404.26px;top:298px;transform:scaleX(0.8200);">6</span>
</div>
</div>
<div id="vscroll" style="left:779px;top:25px;width:17px;height:508px;background:repeating-conic-gradient(#fff 0 25%,#f0f0f0 0 50%) 0 0/2px 2px">
<div class="sb" style="left:0;top:1px"><svg width="7" height="4" viewBox="0 0 7 4" style="left:5px;top:6px"><path d="M0 4L3.5 0.2 7 4z" fill="#000"/></svg></div>
<div class="sb" style="left:0;top:18px"></div>
<div class="sb" style="left:0;top:491px"><svg width="7" height="4" viewBox="0 0 7 4" style="left:5px;top:7px"><path d="M0 0L3.5 3.8 7 0z" fill="#000"/></svg></div>
</div>
</div>
</div>
</div>
<div style="left:1365px;top:0;width:1px;height:728px;background:#000"></div>
<div id="speed" style="left:1206px;top:707px;width:153px;height:20px;border:1px solid #4f8cd6;border-radius:3px;background:linear-gradient(180deg,#f6fafd 0,#e6f0f8 45%,#d3e4f0 55%,#dcebf5 100%)">
<div style="left:74px;top:1px;width:1px;height:16px;background:#b9cfe0"></div>
<svg width="10" height="10" viewBox="0 0 10 10" style="left:5px;top:5px"><path d="M5 0.5V8M1 4.8L5 8.8 9 4.8" fill="none" stroke="#16a016" stroke-width="2"/></svg>
<svg width="10" height="10" viewBox="0 0 10 10" style="left:80px;top:4px"><path d="M5 9.5V2M1 5.2L5 1.2 9 5.2" fill="none" stroke="#f08a10" stroke-width="2"/></svg>
<span class="t c" style="left:39.80px;top:4px;transform:scaleX(0.8947);color:#0a0a1e;">0KB/S</span>
<span class="t c" style="left:113.80px;top:4px;transform:scaleX(0.8947);color:#0a0a1e;">0KB/S</span>
</div>
<div id="taskbar" style="left:0;top:728px;width:1366px;height:40px;background:#3c4a5e"><div style="left:0;top:1px;width:1366px;height:39px;background:#a6bfdc">
<div style="left:0;top:0;width:1366px;height:1px;background:#c3d3e7"></div><div style="left:0;top:0;width:59px;height:39px;background:#8296b1"></div><div style="left:0;top:0;width:59px;height:1px;background:#a3b3c9"></div><svg class="ic" width="40" height="39" viewBox="0 0 40 39" style="left:7px;top:0">
<defs><radialGradient id="orb" cx=".5" cy=".4" r=".7"><stop offset="0" stop-color="#3a86c0"/><stop offset=".6" stop-color="#135a96"/><stop offset="1" stop-color="#0b3f74"/></radialGradient>
<radialGradient id="glow" cx=".5" cy="1" r=".6"><stop offset="0" stop-color="#30e8ff"/><stop offset="1" stop-color="#30e8ff" stop-opacity="0"/></radialGradient>
<linearGradient id="f1" x1="0" y1="0" x2="1" y2="1"><stop offset="0" stop-color="#f47a30"/><stop offset="1" stop-color="#e03818"/></linearGradient>
<linearGradient id="f2" x1="0" y1="0" x2="1" y2="1"><stop offset="0" stop-color="#b8dc5c"/><stop offset="1" stop-color="#5aa82c"/></linearGradient>
<linearGradient id="f3" x1="0" y1="0" x2="1" y2="1"><stop offset="0" stop-color="#6cc0f0"/><stop offset="1" stop-color="#1c78c8"/></linearGradient>
<linearGradient id="f4" x1="0" y1="0" x2="1" y2="1"><stop offset="0" stop-color="#ffd84c"/><stop offset="1" stop-color="#f49c14"/></linearGradient>
<linearGradient id="sh" x1="0" y1="0" x2="0" y2="1"><stop offset="0" stop-color="#fff" stop-opacity=".62"/><stop offset="1" stop-color="#fff" stop-opacity=".12"/></linearGradient></defs>
<circle cx="20" cy="19" r="18" fill="url(#orb)" stroke="#0c3c6c" stroke-width=".8"/>
<circle cx="20" cy="19" r="17.200" fill="url(#glow)"/>
<circle cx="20" cy="19" r="17" fill="none" stroke="#a8d0f0" stroke-width=".7" opacity=".8"/>
<path d="M3.500 18a16.500 16.500 0 0 1 33 0q-8-4.500-16.500-1.500T3.500 18z" fill="url(#sh)"/>
<path d="M13.300 9.600q4.500-2.600 8.600-.4l-2.300 8.300q-4-2.100-8.600.4z" fill="url(#f1)"/>
<path d="M22.800 10q4.200 2.400 9.300-.1l-2.300 8.400q-5 2.500-9.300.1z" fill="url(#f2)"/>
<path d="M10.600 18.900q4.600-2.500 8.600-.3l-2.300 8.400q-4-2.200-8.600.3z" fill="url(#f3)"/>
<path d="M20.100 19.600q4.200 2.400 9.300-.1l-2.300 8.500q-5 2.500-9.300.1z" fill="url(#f4)"/>
</svg><div class="tb" style="left:59px;top:-1px;width:60px;height:40px;background:linear-gradient(180deg,#cfdcee 0,#b3c8e3 55%,#a9c0de 100%)"><div class="gl"></div></div><svg class="ic" width="32" height="32" viewBox="0 0 32 32" style="left:73px;top:2px">
<defs><radialGradient id="lens" cx=".4" cy=".35" r=".7"><stop offset="0" stop-color="#f4ffff"/><stop offset=".6" stop-color="#a4e6ea"/><stop offset="1" stop-color="#62c2d8"/></radialGradient>
<linearGradient id="yb" x1="0" x2="1"><stop offset="0" stop-color="#ffe860"/><stop offset=".3" stop-color="#f8b400"/><stop offset="1" stop-color="#ffd838"/></linearGradient>
<linearGradient id="rb" x1="0" y1="0" x2="0" y2="1"><stop offset="0" stop-color="#f04a2c"/><stop offset="1" stop-color="#c81808"/></linearGradient></defs>
<path d="M.5 5.500L13.500.8l3 1.700V20L5.500 24.800.5 22.500z" fill="url(#yb)" stroke="#d89a00" stroke-width=".6"/>
<path d="M1.500 5.300L13.400 1.300l1.600 1L5.300 5.800z" fill="#fffbe8"/>
<path d="M.7 5.800l4.600 1.500v17L.7 22.300z" fill="#f6a800" opacity=".6"/>
<path d="M5.300 21.500l13.500-4 12.700 6.300-11.700 7z" fill="url(#rb)"/>
<path d="M5.300 21.500l14.500 7.800v2.600L5.300 24.300z" fill="#a81006"/>
<path d="M19.800 29.500l11.500-6.800v2.700L19.800 32.200z" fill="#fff"/>
<path d="M19.800 30.800l11.500-6.800" stroke="#c8c8c8" stroke-width=".5"/>
<path d="M20 17.300l6.800 8" stroke="#1238c8" stroke-width="3.600" stroke-linecap="round"/>
<path d="M20.700 17.200l6.300 7.400" stroke="#6a9cff" stroke-width="1"/>
<circle cx="15.300" cy="11.700" r="5.800" fill="url(#lens)" stroke="#2048c8" stroke-width="1.900"/>
</svg><div class="tb" style="left:121px;top:-1px;width:60px;height:40px;background:linear-gradient(180deg,#cfdcee 0,#b3c8e3 55%,#a9c0de 100%)"><div class="gl"></div></div><svg class="ic" width="36" height="34" viewBox="0 0 36 34" style="left:134px;top:2px">
<defs><radialGradient id="ieb" cx=".5" cy=".85" r=".85"><stop offset="0" stop-color="#3cd0fa"/><stop offset=".42" stop-color="#1680d0"/><stop offset="1" stop-color="#0a2e78"/></radialGradient>
<linearGradient id="ring" x1="0" y1="1" x2="1" y2="0"><stop offset="0" stop-color="#ffe88a"/><stop offset=".35" stop-color="#f8b818"/><stop offset="1" stop-color="#e89a08"/></linearGradient></defs>
<text transform="translate(3.600 28.800) scale(1.12 1)" font-family="Liberation Sans, sans-serif" font-weight="bold" font-size="46" fill="url(#ieb)">e</text>
<g transform="translate(0 1) rotate(-41 18 16.5)"><path d="M4 22.500Q-2.500 20-2 16.500A20 8 0 0 1 38 16.500Q38 19 35 20.500" fill="none" stroke="url(#ring)" stroke-width="2"/><path d="M-2.500 17.500A20 8.500 0 0 1 9 10" fill="none" stroke="#fff0a0" stroke-width="3.500" opacity=".55"/></g>
</svg><svg class="ic" width="33" height="30" viewBox="0 0 33 30" style="left:197px;top:5px">
<defs><linearGradient id="fo" x1="0" y1="0" x2="0" y2="1"><stop offset="0" stop-color="#fdf3bf"/><stop offset="1" stop-color="#eed580"/></linearGradient>
<linearGradient id="fb" x1="0" y1="0" x2="0" y2="1"><stop offset="0" stop-color="#bfe9fb"/><stop offset="1" stop-color="#48a8dc"/></linearGradient></defs>
<path d="M1 5l1.5-3h13l1.5 3z" fill="#f2dc8c" stroke="#cfb55c" stroke-width=".6"/>
<path d="M9 7.5l1.5-3h14l1.500 3z" fill="#f2dc8c" stroke="#cfb55c" stroke-width=".6"/>
<path d="M17 10l1.5-3h12l1.500 3z" fill="#f2dc8c" stroke="#cfb55c" stroke-width=".6"/>
<path d="M1 5h8.500v2.500h8v2.500H32v17H1z" fill="url(#fo)" stroke="#d2b860" stroke-width=".7"/>
<path d="M9.500 7.500l1.200-2.500h13l1.300 2.500M17.500 10l1.200-2.500h12l1.300 2.500" fill="#f6e49c" stroke="#cfb55c" stroke-width=".6"/>
<rect x="4" y="2.300" width="8" height="2" fill="#fff"/><rect x="4" y="2.300" width="3" height="2" fill="#10b030"/>
<rect x="12" y="4.700" width="9" height="2" fill="#fff"/><rect x="12" y="4.700" width="3" height="2" fill="#d02020"/>
<rect x="20" y="7.200" width="9" height="2" fill="#fff"/><rect x="20" y="7.200" width="3" height="2" fill="#1898e8"/>
<path d="M5 18q0-1.500 1.500-1.500h20q1.500 0 1.500 1.500v10.500q0 1-1 1h-4q-1 0-1-1V22H11v6.500q0 1-1 1H6q-1 0-1-1z" fill="url(#fb)" stroke="#2e8cc8" stroke-width=".8" opacity=".95"/>
<path d="M7.500 10v14M2 17.500h11M4 13.500l7 8M11 13.500l-7 8" stroke="#fff" stroke-width=".7" opacity=".85"/>
</svg><div class="tb" style="left:245px;top:-1px;width:60px;height:40px;background:linear-gradient(180deg,#cfdcee 0,#b3c8e3 55%,#a9c0de 100%)"><div class="gl"></div></div><svg class="ic" width="33" height="31" viewBox="0 0 33 31" style="left:259px;top:2px">
<defs><linearGradient id="pp" x1="0" y1="0" x2="1" y2="1"><stop offset="0" stop-color="#ff8a3c"/><stop offset="1" stop-color="#d8380c"/></linearGradient></defs>
<path d="M1 27V9q0-8 8-8h18v22l-20 5z" fill="#fbe3d6" stroke="#ee5a1c" stroke-width="1.2"/>
<path d="M3 26V10q0-7 7-7h15" fill="none" stroke="#ffc4a4" stroke-width="1.300"/>
<path d="M6 9l26-1-1.500 21-24-3z" fill="#fdf1ea"/>
<path d="M8 11.500l21-1-1 14.500-19.500-2z" fill="url(#pp)"/>
<rect x="10.500" y="13.500" width="6" height="1.600" fill="#fff"/><rect x="10.500" y="16.500" width="6" height="1.600" fill="#fff"/><rect x="10.500" y="19.500" width="6" height="1.600" fill="#fff"/>
<circle cx="22.500" cy="17.500" r="4.200" fill="#fff"/><path d="M22.500 17.500V13.300a4.200 4.200 0 0 1 4.200 4.200z" fill="#e8501c"/>
</svg><div class="tb" style="left:307px;top:-1px;width:60px;height:40px;background:linear-gradient(180deg,#cfdcee 0,#b3c8e3 55%,#a9c0de 100%)"><div class="gl"></div></div><svg class="ic" width="29" height="27" viewBox="0 0 29 27" style="left:323px;top:4px">
<defs><linearGradient id="ar" x1="0" y1="0" x2="0" y2="1"><stop offset="0" stop-color="#f01818"/><stop offset=".45" stop-color="#b80c0c"/><stop offset="1" stop-color="#5a0000"/></linearGradient></defs>
<rect width="28.500" height="26.500" fill="url(#ar)"/>
<path d="M14 3.500c1.800 0 1.200 5.500-1 10.500-2.500 5.500-6.500 9.500-8 8.500-1.600-1 2-5 9-7 6-1.800 11.500-1.500 11.500.5 0 1.800-5 .5-8.500-3.500-3.500-4-4.500-9-3-9z" fill="none" stroke="#fff" stroke-width="1.100"/>
</svg><div class="tb" style="left:374px;top:-1px;width:55px;height:40px;background:linear-gradient(180deg,#e4ecf6 0,#c4d5eb 55%,#b4c9e4 100%)"></div><div class="tb" style="left:369px;top:-1px;width:55px;height:40px;background:linear-gradient(180deg,#e4ecf6 0,#c4d5eb 55%,#b4c9e4 100%)"><div class="gl"></div></div><svg class="ic" width="31" height="31" viewBox="0 0 31 31" style="left:380px;top:2px">
<rect x="4.500" y=".5" width="22" height="17" fill="#0808b0" stroke="#000"/><rect x="5" y="1" width="21" height="2" fill="#00d8d8"/>
<text x="6" y="10.300" font-family="Liberation Sans, sans-serif" font-weight="bold" font-size="7.500" fill="#fff">C:</text>
<rect x="15.500" y="7.500" width="15" height="16" fill="#fff" stroke="#000"/><rect x="16" y="8" width="14" height="2" fill="#00d8d8"/>
<path d="M24 11.500h5M24 13.500h5M24 15.500h5M24 17.500h5M24 19.500h5M24 21.500h5" stroke="#000" stroke-width="1"/>
<rect x=".5" y="12.500" width="22" height="17" fill="#fff" stroke="#000"/><rect x="1" y="13" width="21" height="2" fill="#00d8d8"/>
<path d="M22.500 30.500h1.500v-6M31 23.500v1.500h-7" stroke="#000" stroke-width="1" fill="none"/>
<rect x="4" y="17" width="3" height="3" fill="#000"/><rect x="10" y="17" width="3" height="3" fill="#008080"/><rect x="16" y="17" width="3" height="3" fill="#0000c0"/>
<rect x="4" y="23.500" width="3" height="3" fill="#c000c0"/><rect x="10" y="23.500" width="3" height="3" fill="#c0c000"/><rect x="16" y="23.500" width="3" height="3" fill="#00a0e0"/>
<path d="M3.500 21.500h4M9.500 21.500h4M15.500 21.500h4M3.500 27.800h4M9.500 27.800h4M15.500 27.800h4" stroke="#000" stroke-width="1"/>
</svg><div style="left:972px;top:1px;width:380px;height:38px;background:linear-gradient(90deg,rgba(128,147,173,0),#8093ad 40px)"></div><span class="t m" style="left:1024.40px;top:12px;transform:scaleX(0.9013);color:#fff;">CH</span><svg class="ic" width="17" height="15" viewBox="0 0 17 15" style="left:1045px;top:9px"><path d="M3 6.500c1-3 3-3.500 5-3s3.500-.5 5-2.500" fill="none" stroke="#c8c8c8" stroke-width="1.100"/><rect x=".6" y="6.600" width="15.500" height="7.500" rx="1.500" fill="#c4c4c4" stroke="#8a8a8a" stroke-width="1"/><path d="M3 9h11M3 11.500h11" stroke="#f4f4f4" stroke-width="1.300" stroke-dasharray="1.500 .8"/></svg><svg class="ic" width="17" height="17" viewBox="0 0 17 17" style="left:1066px;top:8px"><defs><radialGradient id="hb" cx=".45" cy=".35" r=".7"><stop offset="0" stop-color="#2030e0"/><stop offset="1" stop-color="#000070"/></radialGradient></defs><circle cx="8.500" cy="8.500" r="7.600" fill="url(#hb)" stroke="#9098a8" stroke-width="1.400"/><circle cx="8.500" cy="8.500" r="8.200" fill="none" stroke="#404858" stroke-width=".5"/><text x="8.600" y="13" text-anchor="middle" font-family="Liberation Sans, sans-serif" font-weight="bold" font-size="12.500" fill="#fff">?</text></svg><svg class="ic" width="9" height="18" viewBox="0 0 9 18" style="left:1092px;top:8px"><path d="M2.500 2.500V.6h6v4h-2" fill="none" stroke="#fff" stroke-width="1.100"/><rect x=".6" y="2.600" width="6" height="3.800" fill="none" stroke="#fff" stroke-width="1.100"/><path d="M1.500 13.500h6l-3 3.200z" fill="#fff"/></svg><svg class="ic" width="9" height="5" viewBox="0 0 9 5" style="left:1111px;top:17px"><path d="M0 5L4.500 .3 9 5z" fill="#fff"/></svg><svg class="ic" width="15" height="17" viewBox="0 0 15 17" style="left:1131px;top:12px"><defs><radialGradient id="sm" cx=".4" cy=".3" r=".8"><stop offset="0" stop-color="#fff27a"/><stop offset=".6" stop-color="#ffd21a"/><stop offset="1" stop-color="#f09a00"/></radialGradient></defs><path d="M3 12.500l1.500 3.500 2-1.500 2.500 1.800 2.500-3z" fill="#2a88e0"/><circle cx="7.300" cy="7" r="6.500" fill="url(#sm)"/><path d="M4.500 8.200q4-2.800 8-1.200-.5 4.500-4 4.800T4.500 8.200z" fill="#e83a10"/><path d="M6 10q2.500-1.200 5 0-1.200 1.500-2.600 1.500T6 10z" fill="#ff8a20"/></svg><svg class="ic" width="16" height="17" viewBox="0 0 16 17" style="left:1155px;top:11px"><ellipse cx="3.800" cy="15.600" rx="2.800" ry="1.200" fill="#f4a010"/><ellipse cx="12" cy="15.600" rx="2.800" ry="1.200" fill="#f4a010"/><path d="M1.200 11.500q-1.500-2.500 1.800-5L5 9zM14.800 11.500q1.500-2.500-1.800-5L11 9z" fill="#181818"/><ellipse cx="8" cy="10.500" rx="5.500" ry="5.500" fill="#181818"/><ellipse cx="8" cy="11.600" rx="4" ry="4.200" fill="#f8f8f8"/><ellipse cx="8" cy="4.800" rx="4.800" ry="4.600" fill="#181818"/><ellipse cx="6.500" cy="4" rx="1.300" ry="1.700" fill="#fff"/><ellipse cx="9.500" cy="4" rx="1.300" ry="1.700" fill="#fff"/><circle cx="6.900" cy="4.300" r=".6" fill="#000"/><circle cx="9.100" cy="4.300" r=".6" fill="#000"/><ellipse cx="8" cy="6.700" rx="3.200" ry="1.100" fill="#f8a010"/><path d="M2.800 7.500q5.200 2.800 10.400 0l.3 2q-5.500 2.800-11 0z" fill="#e01c1c"/><path d="M5 9.500l1.800.5-.3 3-1.500-.3z" fill="#e01c1c"/></svg><svg class="ic" width="17" height="16" viewBox="0 0 17 16" style="left:1179.500px;top:12px"><path d="M.5 4.500L6 .8l2 .7v12.500H.5z" fill="#e8e020" stroke="#6a6a00" stroke-width=".6"/><path d="M2.500 4.500L6 2v11.500H2.500z" fill="#f8f8c0"/><path d="M4 10.500h12.500v4.500H.5v-1z" fill="#e81818"/><path d="M.5 15h16" stroke="#000" stroke-width="1"/><path d="M14 11l2.500-1.500v4L14 15z" fill="#fff"/><path d="M8.500 8l5 5.500" stroke="#1030e0" stroke-width="2"/><circle cx="7" cy="6" r="3.300" fill="#a8f0f8" stroke="#1838d8" stroke-width="1.300"/></svg><svg class="ic" width="17" height="17" viewBox="0 0 17 17" style="left:1203.500px;top:11px"><g stroke="#28323f" stroke-width="2.600" fill="none" stroke-linejoin="round"><rect x="5.500" y="3" width="10" height="8.500"/><path d="M7 14.800h7M10.500 12v2.500"/><path d="M1.500 1.500v4h4v-4M3.500 1v15"/></g><rect x="5.500" y="3" width="10" height="8.500" fill="#5a6a80" stroke="#fff" stroke-width="1.300"/><path d="M7 14.800h7M10.500 12v2.500" stroke="#fff" stroke-width="1.300"/><path d="M1.500 1.500v4h4v-4M3.500 1v15" stroke="#fff" stroke-width="1.300" fill="none"/></svg><svg class="ic" width="16" height="17" viewBox="0 0 16 17" style="left:1227.500px;top:11px"><g stroke="#28323f" stroke-width="3" fill="none" stroke-linejoin="round"><rect x="1.300" y="2.600" width="7.600" height="13.200" rx="1.500"/><path d="M4 1.500h2.400"/></g><rect x="1.300" y="2.600" width="7.600" height="13.200" rx="1.500" fill="#eef1f5" stroke="#fff" stroke-width="1.300"/><path d="M3.800 1.600h2.800" stroke="#fff" stroke-width="1.300"/><g stroke="#28323f" stroke-width="2.800" fill="#28323f" stroke-linejoin="round"><path d="M6.800 5.200h8v2q0 4.200-4 4.200t-4-4.200z"/><path d="M9.300 5V2M12.300 5V2M10.800 11v5.300" fill="none"/></g><path d="M6.800 5.200h8v2q0 4.200-4 4.200t-4-4.200z" fill="#fff"/><path d="M9.300 5V1.900M12.300 5V1.900" stroke="#fff" stroke-width="1.400" fill="none"/><path d="M10.800 11v5.500" stroke="#fff" stroke-width="1.700" fill="none"/></svg><svg class="ic" width="17" height="17" viewBox="0 0 17 17" style="left:1251.500px;top:11px"><path d="M.8 5.500h2.200L7.500.8v15L3 11.500H.8z" fill="#fff" stroke="#28323f" stroke-width=".9"/><circle cx="11.700" cy="11.500" r="3.700" fill="#fff" stroke="#e81010" stroke-width="1.500"/><path d="M9.300 9l4.800 5" stroke="#e81010" stroke-width="1.500"/></svg><span class="t u" style="left:1298.70px;top:5px;transform:scaleX(1.0283);color:#fff;">11:30</span><span class="t u" style="left:1284.60px;top:23px;transform:scaleX(1.1037);color:#fff;">2011/3/31</span><div style="left:1351px;top:0;width:1px;height:39px;background:#4f5b6d"></div><div style="left:1352px;top:0;width:14px;height:38px;border:1px solid #9eabbd;background:linear-gradient(180deg,#8b96a7 0,#6f7b8d 20%,#586577 50%,#637188 78%,#7d8da7 100%)"><div style="left:0;top:0;width:12px;height:12px;background:linear-gradient(160deg,rgba(255,255,255,.18),rgba(255,255,255,0) 70%)"></div></div>
</div></div>
</body></html>
